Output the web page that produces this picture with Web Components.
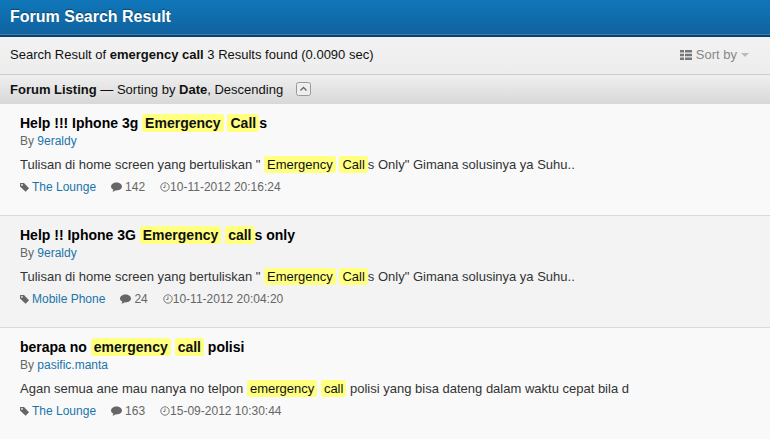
<!DOCTYPE html>
<html lang="id">
<head>
<meta charset="utf-8">
<meta name="viewport" content="width=device-width, initial-scale=1">
<title>Forum Search Result</title>
<style>
  body{margin:0;background:#f9f9f9;color:#111;font:13px/18px "Liberation Sans",Arial,sans-serif}
</style>
</head>
<body>
<search-page>
  <page-header>Forum Search Result</page-header>
  <result-summary>Search Result of <b>emergency call</b> 3 Results found (0.0090 sec)</result-summary>
  <listing-bar><b>Forum Listing</b> — Sorting by <b>Date</b>, Descending</listing-bar>
  <search-result author="9eraldy" forum="The Lounge" replies="142" date="10-11-2012 20:16:24">
    <span slot="title">Help !!! Iphone 3g <hit-mark>Emergency</hit-mark> <hit-mark>Call</hit-mark>s</span>
    Tulisan di home screen yang bertuliskan "<hit-mark>Emergency</hit-mark> <hit-mark>Call</hit-mark>s Only" Gimana solusinya ya Suhu..
  </search-result>
  <search-result author="9eraldy" forum="Mobile Phone" replies="24" date="10-11-2012 20:04:20">
    <span slot="title">Help !! Iphone 3G <hit-mark>Emergency</hit-mark> <hit-mark>call</hit-mark>s only</span>
    Tulisan di home screen yang bertuliskan "<hit-mark>Emergency</hit-mark> <hit-mark>Call</hit-mark>s Only" Gimana solusinya ya Suhu..
  </search-result>
  <search-result author="pasific.manta" forum="The Lounge" replies="163" date="15-09-2012 10:30:44">
    <span slot="title">berapa no <hit-mark>emergency</hit-mark> <hit-mark>call</hit-mark> polisi</span>
    Agan semua ane mau nanya no telpon <hit-mark>emergency</hit-mark> <hit-mark>call</hit-mark> polisi yang bisa dateng dalam waktu cepat bila d
  </search-result>
</search-page>

<script>
class SearchPage extends HTMLElement {
  constructor() {
    super();
    this.attachShadow({ mode: "open" }).innerHTML = `
      <style>
        :host{display:block;border-right:1px solid #fff}
        main{display:flex;flex-direction:column}
        ::slotted(search-result:nth-of-type(even)){background:#f3f3f3}
      </style>
      <main><slot></slot></main>`;
  }
}

class PageHeader extends HTMLElement {
  constructor() {
    super();
    this.attachShadow({ mode: "open" }).innerHTML = `
      <style>
        :host{display:block;padding:6px 10px 8px;background:linear-gradient(#1077ba,#10629e);border-bottom:2px solid #0b4270;box-shadow:inset 0 -1px #3b80b2}
        h1{margin:0;color:#fff;font-size:16px;line-height:21px;text-shadow:0 -1px 1px rgba(0,0,0,.4)}
      </style>
      <h1><slot></slot></h1>`;
  }
}

class ResultSummary extends HTMLElement {
  constructor() {
    super();
    this.attachShadow({ mode: "open" }).innerHTML = `
      <style>
        :host{display:flex;justify-content:space-between;align-items:center;padding:9px 21px 10px 10px;background:linear-gradient(#f2f2f2,#ededed);border-bottom:1px solid #ccc}
        p{margin:0}
        button{display:flex;align-items:center;gap:4px;padding:0;border:0;background:none;color:#888;font:inherit;cursor:pointer}
      </style>
      <p><slot></slot></p>
      <button type="button" aria-haspopup="true">
        <svg width="12" height="10" viewBox="0 0 12 10" fill="#777" aria-hidden="true"><path d="M0 0h4v2.6H0zM5 0h7v2.6H5zM0 3.7h4v2.6H0zM5 3.7h7v2.6H5zM0 7.4h4V10H0zM5 7.4h7V10H5z"/></svg>
        Sort by
        <svg width="8" height="4" viewBox="0 0 8 4" fill="#bbb" aria-hidden="true"><path d="M0 0h8L4 4z"/></svg>
      </button>`;
  }
}

class ListingBar extends HTMLElement {
  constructor() {
    super();
    this.attachShadow({ mode: "open" }).innerHTML = `
      <style>
        :host{display:flex;align-items:center;gap:13px;padding:6px 10px 5px;background:linear-gradient(#efefef,#d8d8d8)}
        p{margin:0}
        button{display:flex;padding:0 0 2px;border:0;background:none;cursor:pointer}
      </style>
      <p><slot></slot></p>
      <button type="button" aria-label="Toggle sort direction">
        <svg width="15" height="14" viewBox="0 0 15 14" fill="none" aria-hidden="true"><rect x=".5" y=".5" width="14" height="13" rx="2" fill="#eee" stroke="#999"/><path d="M4.5 8.5l3-3 3 3" stroke="#666" stroke-width="1.3"/></svg>
      </button>`;
  }
}

// highlighted search term
class HitMark extends HTMLElement {
  constructor() {
    super();
    this.attachShadow({ mode: "open" }).innerHTML = `
      <style>
        :host{display:inline}
        mark{padding:1px 3px;border-radius:3px;background:#ffff80;color:#111}
      </style>
      <mark><slot></slot></mark>`;
  }
}

class SearchResult extends HTMLElement {
  constructor() { super(); this.attachShadow({ mode: "open" }); }
  connectedCallback() { this.render(); }
  render() {
    const attr = (n) => this.getAttribute(n) || "";
    this.shadowRoot.innerHTML = `
      <style>
        :host{display:block;padding:10px 20px 19px;border-bottom:1px solid #d9d9d9;background:#f9f9f9}
        h2{margin:0;color:#000;font-size:14px;line-height:18px}
        a{color:#1a75aa;text-decoration:none}
        .by,.meta{color:#666;font-size:12px}
        .by{line-height:18px}
        p{margin:6px 0 4px;color:#333}
        .meta{display:flex;gap:15px;line-height:18px}
        .meta span{display:flex;align-items:center;gap:3px}
        .meta .time{gap:0}
        svg{flex:none;fill:#666}
      </style>
      <h2><slot name="title"></slot></h2>
      <div class="by">By <a href="#">${attr("author")}</a></div>
      <p><slot></slot></p>
      <div class="meta">
        <span><svg width="9" height="10" viewBox="0 0 9 10" aria-hidden="true"><path fill-rule="evenodd" d="M0 1.6Q0 1 .6 1H4l5 5.2L5.6 9.7 0 4.6zM1.9 2a.9.9 0 1 0 .1 1.8A.9.9 0 0 0 1.9 2z"/></svg><a href="#">${attr("forum")}</a></span>
        <span><svg width="11" height="10" viewBox="0 0 11 10" aria-hidden="true"><path d="M5.5.6C8.6.6 11 2.3 11 4.600S8.600 8.400 5.500 8.400L4.700 8.300C3.800 9.200 2.700 9.600 1.400 9.700 2 9.100 2.300 8.400 2.200 7.600.9 6.900 0 5.900 0 4.600 0 2.300 2.400.6 5.500.6z"/></svg>${attr("replies")}</span>
        <span class="time"><svg width="10" height="10" viewBox="0 0 10 10" aria-hidden="true"><circle cx="5" cy="5" r="4.2" fill="none" stroke="#777"/><path d="M5 2.500V5.500H3.300" fill="none" stroke="#777"/></svg>${attr("date")}</span>
      </div>`;
  }
}

customElements.define("hit-mark", HitMark);
customElements.define("page-header", PageHeader);
customElements.define("result-summary", ResultSummary);
customElements.define("listing-bar", ListingBar);
customElements.define("search-result", SearchResult);
customElements.define("search-page", SearchPage);
</script>
</body>
</html>
